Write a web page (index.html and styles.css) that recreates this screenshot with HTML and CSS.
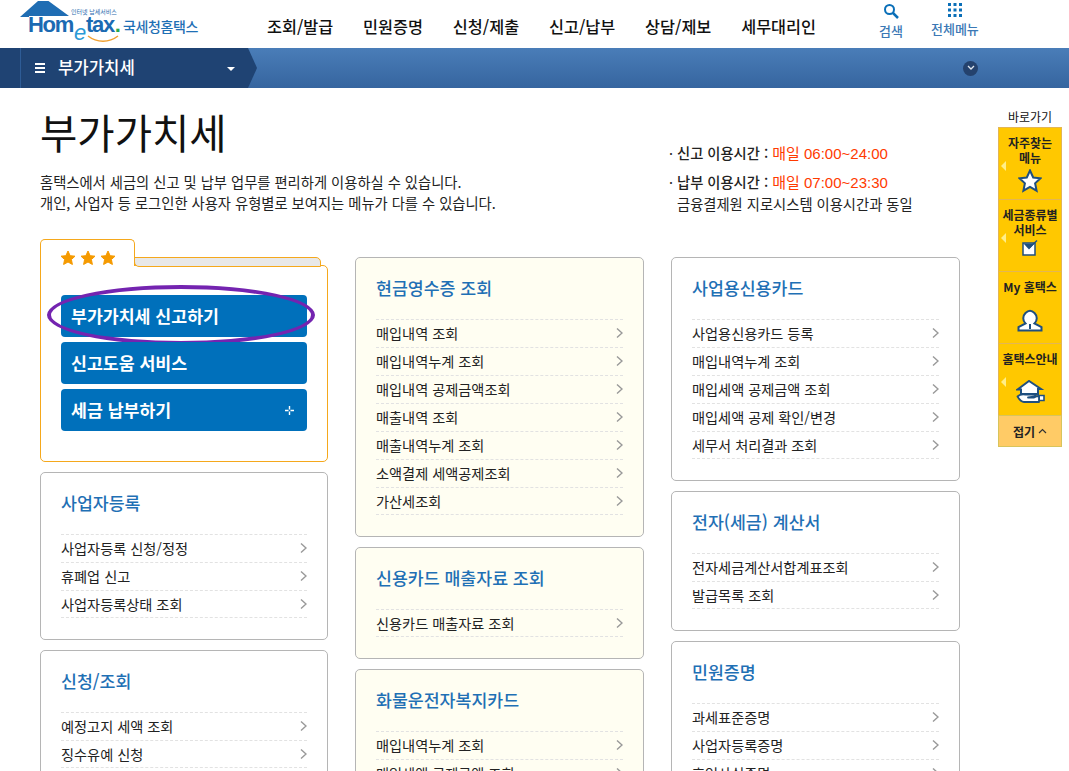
FILE: index.html
```html
<!DOCTYPE html>
<html lang="ko">
<head>
    <meta charset="UTF-8">
    <title>부가가치세 - 국세청홈택스</title>
    <link rel="stylesheet" href="styles.css">
</head>
<body>

<svg class="sprites" width="0" height="0">
    <symbol id="chev" viewBox="0 0 7 10"><path d="M1 .5l5 4.500-5 4.500" fill="none" stroke="#999" stroke-width="1.400"/></symbol>
    <symbol id="star" viewBox="0 0 24 24"><path d="M12 1.500l3.200 7 7.300.8-5.400 5 1.500 7.400L12 18l-6.600 3.700 1.500-7.400-5.400-5 7.300-.8z"/></symbol>
</svg>

<header class="top">
    <a class="logo">
        <svg class="logo-roof" width="50" height="18" viewBox="0 0 50 18"><path d="M0 17L18 1h10.500L49 16H9v1z" fill="#1f6db3"/></svg>
        <span class="logo-small">인터넷 납세서비스</span>
        <span class="logo-word">Hom<i>e</i>tax<b>.</b></span>
        <svg class="logo-smile" width="32" height="8" viewBox="0 0 32 8"><path d="M1 1c9 7 21 7 30 0" fill="none" stroke="#f0a030" stroke-width="1.500"/></svg>
        <span class="logo-name">국세청홈택스</span>
    </a>
    <nav class="gnb">
        <a>조회/발급</a>
        <a>민원증명</a>
        <a>신청/제출</a>
        <a>신고/납부</a>
        <a>상담/제보</a>
        <a>세무대리인</a>
    </nav>
    <div class="top-tools">
        <a class="tool">
            <svg width="16" height="16" viewBox="0 0 16 16"><circle cx="6.500" cy="6.500" r="4.500" fill="none" stroke="#0a6fb8" stroke-width="2"/><path d="M10 10l5 5" stroke="#0a6fb8" stroke-width="2.500"/></svg>
            검색
        </a>
        <a class="tool">
            <svg width="14" height="14" viewBox="0 0 14 14" fill="#0a6fb8"><rect width="3" height="3"/><rect x="5.500" width="3" height="3"/><rect x="11" width="3" height="3"/><rect y="5.500" width="3" height="3"/><rect x="5.500" y="5.500" width="3" height="3"/><rect x="11" y="5.500" width="3" height="3"/><rect y="11" width="3" height="3"/><rect x="5.500" y="11" width="3" height="3"/><rect x="11" y="11" width="3" height="3"/></svg>
            전체메뉴
        </a>
    </div>
</header>

<div class="subbar">
    <div class="crumb">
        <span class="burger"><i></i><i></i><i></i></span>
        <span class="crumb-text">부가가치세</span>
        <span class="caret"></span>
        <svg class="crumb-tip" width="10" height="40" viewBox="0 0 10 40"><path d="M0 0l9 20-9 20z" fill="#1f4373"/></svg>
    </div>
    <span class="more"><svg width="8" height="6" viewBox="0 0 8 6"><path d="M1 1l3 3 3-3" fill="none" stroke="#dfe6ee" stroke-width="1.300"/></svg></span>
</div>

<main class="content">
    <section class="intro">
        <div>
            <h1>부가가치세</h1>
            <p>홈택스에서 세금의 신고 및 납부 업무를 편리하게 이용하실 수 있습니다.<br>개인, 사업자 등 로그인한 사용자 유형별로 보여지는 메뉴가 다를 수 있습니다.</p>
        </div>
        <ul class="hours">
            <li>· <b>신고 이용시간 :</b> <em>매일 06:00~24:00</em></li>
            <li>· <b>납부 이용시간 :</b> <em>매일 07:00~23:30</em><br><span>금융결제원 지로시스템 이용시간과 동일</span></li>
        </ul>
    </section>

    <div class="cols">
        <div class="col">
            <div class="folder">
                <div class="folder-head">
                    <div class="folder-tab">
                        <svg width="16" height="16"><use href="#star" fill="#f59a00" stroke="#f59a00" stroke-width="1.500" stroke-linejoin="round"/></svg>
                        <svg width="16" height="16"><use href="#star" fill="#f59a00" stroke="#f59a00" stroke-width="1.500" stroke-linejoin="round"/></svg>
                        <svg width="16" height="16"><use href="#star" fill="#f59a00" stroke="#f59a00" stroke-width="1.500" stroke-linejoin="round"/></svg>
                    </div>
                    <div class="folder-back"></div>
                </div>
                <div class="folder-body">
                    <a class="blue-btn">부가가치세 신고하기<span class="mark"></span></a>
                    <a class="blue-btn">신고도움 서비스</a>
                    <a class="blue-btn">세금 납부하기<svg class="plus" width="9" height="9" viewBox="0 0 9 9"><path d="M4.500 0v3.500M4.500 5.500V9M0 4.500h3.500M5.500 4.500H9" stroke="#fff" stroke-width="1.400"/></svg></a>
                </div>
            </div>

            <div class="card">
                <h2>사업자등록</h2>
                <ul>
                    <li>사업자등록 신청/정정<svg width="7" height="10"><use href="#chev"/></svg></li>
                    <li>휴폐업 신고<svg width="7" height="10"><use href="#chev"/></svg></li>
                    <li>사업자등록상태 조회<svg width="7" height="10"><use href="#chev"/></svg></li>
                </ul>
            </div>
            <div class="card">
                <h2>신청/조회</h2>
                <ul>
                    <li>예정고지 세액 조회<svg width="7" height="10"><use href="#chev"/></svg></li>
                    <li>징수유예 신청<svg width="7" height="10"><use href="#chev"/></svg></li>
                </ul>
            </div>
        </div>

        <div class="col col-mid">
            <div class="card card-cream">
                <h2>현금영수증 조회</h2>
                <ul>
                    <li>매입내역 조회<svg width="7" height="10"><use href="#chev"/></svg></li>
                    <li>매입내역누계 조회<svg width="7" height="10"><use href="#chev"/></svg></li>
                    <li>매입내역 공제금액조회<svg width="7" height="10"><use href="#chev"/></svg></li>
                    <li>매출내역 조회<svg width="7" height="10"><use href="#chev"/></svg></li>
                    <li>매출내역누계 조회<svg width="7" height="10"><use href="#chev"/></svg></li>
                    <li>소액결제 세액공제조회<svg width="7" height="10"><use href="#chev"/></svg></li>
                    <li>가산세조회<svg width="7" height="10"><use href="#chev"/></svg></li>
                </ul>
            </div>
            <div class="card card-cream">
                <h2>신용카드 매출자료 조회</h2>
                <ul>
                    <li>신용카드 매출자료 조회<svg width="7" height="10"><use href="#chev"/></svg></li>
                </ul>
            </div>
            <div class="card card-cream">
                <h2>화물운전자복지카드</h2>
                <ul>
                    <li>매입내역누계 조회<svg width="7" height="10"><use href="#chev"/></svg></li>
                    <li>매입세액 공제금액 조회<svg width="7" height="10"><use href="#chev"/></svg></li>
                </ul>
            </div>
        </div>

        <div class="col col-mid">
            <div class="card">
                <h2>사업용신용카드</h2>
                <ul>
                    <li>사업용신용카드 등록<svg width="7" height="10"><use href="#chev"/></svg></li>
                    <li>매입내역누계 조회<svg width="7" height="10"><use href="#chev"/></svg></li>
                    <li>매입세액 공제금액 조회<svg width="7" height="10"><use href="#chev"/></svg></li>
                    <li>매입세액 공제 확인/변경<svg width="7" height="10"><use href="#chev"/></svg></li>
                    <li>세무서 처리결과 조회<svg width="7" height="10"><use href="#chev"/></svg></li>
                </ul>
            </div>
            <div class="card">
                <h2>전자(세금) 계산서</h2>
                <ul>
                    <li>전자세금계산서합계표조회<svg width="7" height="10"><use href="#chev"/></svg></li>
                    <li>발급목록 조회<svg width="7" height="10"><use href="#chev"/></svg></li>
                </ul>
            </div>
            <div class="card">
                <h2>민원증명</h2>
                <ul>
                    <li>과세표준증명<svg width="7" height="10"><use href="#chev"/></svg></li>
                    <li>사업자등록증명<svg width="7" height="10"><use href="#chev"/></svg></li>
                    <li>휴업사실증명<svg width="7" height="10"><use href="#chev"/></svg></li>
                </ul>
            </div>
        </div>
    </div>
</main>

<aside class="quick">
    <div class="quick-title">바로가기</div>
    <a class="quick-item has-arrow">
        <span>자주찾는<br>메뉴</span>
        <svg width="24" height="24"><use href="#star" fill="#fff" stroke="#1f4f7f" stroke-width="2"/></svg>
    </a>
    <a class="quick-item has-arrow">
        <span>세금종류별<br>서비스</span>
        <svg class="icon-check" width="18" height="18" viewBox="0 0 18 18"><path d="M2 4h12v12H2z" fill="#fff" stroke="#1f4f7f" stroke-width="1.500"/><path d="M2.500 4.500l5.500 6 5.500-6z" fill="#1f4f7f"/><path d="M8 9l8-7.500" fill="none" stroke="#1f4f7f" stroke-width="1.500"/></svg>
    </a>
    <a class="quick-item">
        <span>My 홈택스</span>
        <svg class="icon-low" width="26" height="24" viewBox="0 0 26 24"><path d="M1.500 22.500v-3.500l7-3.500c-3-3-3-7.500 0-10.500 3-3 6-3 9 0 3 3 3 7.500 0 10.500l7 3.500v3.500z" fill="#fff" stroke="#1f4f7f" stroke-width="2"/><path d="M13 16v5" stroke="#1f4f7f" stroke-width="2"/></svg>
    </a>
    <a class="quick-item has-arrow">
        <span>홈택스안내</span>
        <svg class="icon-low" width="29" height="24" viewBox="0 0 29 24"><path d="M1.500 9.500L13 1l12 8h-3v5H5V9.500z" fill="#fff" stroke="#1f4f7f" stroke-width="2"/><path d="M23 15.500h5v5h-5z" fill="#fff" stroke="#1f4f7f" stroke-width="1.600"/><path d="M1.500 16.500C4 14 7 14 9.500 14.500H18c2 0 2 3 0 3h-6l11-1.500v6H8c-3 0-5-3-6.500-5.500z" fill="#fff" stroke="#1f4f7f" stroke-width="1.800" stroke-linejoin="round"/></svg>
    </a>
    <a class="quick-fold">접기<svg width="9" height="6" viewBox="0 0 9 6"><path d="M1 5l3.500-3.500L8 5" fill="none" stroke="#333" stroke-width="1.200"/></svg></a>
</aside>

</body>
</html>
```

FILE: styles.css
```css
html, body {
    margin: 0;
    padding: 0;
    height: 771px;
    overflow: hidden;
}
body {
    position: relative;
    background-color: white;
    color: #222;
    font-family: "Noto Sans CJK KR", "Noto Sans", sans-serif;
    font-size: 14px;
}
a {
    color: inherit;
    text-decoration: none;
}
ul {
    list-style: none;
    margin: 0;
    padding: 0;
}
.sprites {
    position: absolute;
}

/* header */
.top {
    display: flex;
    height: 48px;
    padding-left: 20px;
}
.logo {
    position: relative;
    display: block;
    width: 247px;
    height: 48px;
}
.logo-roof {
    position: absolute;
    left: 0;
    top: 0;
}
.logo-small {
    position: absolute;
    left: 51px;
    top: 8px;
    font-size: 6px;
    line-height: 8px;
    color: #2a6cae;
}
.logo-word {
    position: absolute;
    left: 8px;
    top: 16px;
    font-family: "Liberation Sans", sans-serif;
    font-size: 22px;
    font-weight: bold;
    line-height: 18px;
    letter-spacing: -1.300px;
    color: #1b6ab2;
    white-space: nowrap;
}
.logo-word i {
    position: relative;
    top: 8px;
    padding: 0 1px;
    font-size: 22px;
    font-weight: normal;
    color: #2b9ad6;
}
.logo-word b {
    margin-left: 1px;
    color: #2aa84a;
}
.logo-smile {
    position: absolute;
    left: 67px;
    top: 35px;
}
.logo-name {
    position: absolute;
    left: 103px;
    top: 16px;
    font-size: 14px;
    font-weight: 500;
    line-height: 20px;
    letter-spacing: -.4px;
    color: #1f70b5;
}
.gnb {
    display: flex;
    gap: 29.800px;
    padding-top: 14px;
    font-size: 16.300px;
    font-weight: 500;
    line-height: 24px;
    color: #111;
}
.top-tools {
    display: flex;
    margin-left: 63px;
    gap: 28px;
}
.tool {
    display: flex;
    flex-direction: column;
    align-items: center;
    padding-top: 3px;
    gap: 3px;
    font-size: 13px;
    font-weight: 500;
    line-height: 18px;
    color: #3b78b5;
}

.subbar {
    display: flex;
    align-items: center;
    justify-content: flex-end;
    height: 40px;
    padding-right: 91px;
    background: linear-gradient(90deg, #1f4373 20px, transparent 20px), linear-gradient(#4a7db8, #36659f);
}
.crumb {
    position: relative;
    display: flex;
    align-items: center;
    box-sizing: border-box;
    width: 228px;
    height: 40px;
    margin-right: auto;
    margin-left: 20px;
    padding-left: 35px;
    border-left: 1px solid #2e5c96;
    background-color: #1f4373;
    color: white;
}
.burger {
    display: flex;
    flex-direction: column;
    gap: 2px;
    width: 10px;
    margin-left: -21px;
    margin-right: 13px;
}
.burger i {
    height: 2px;
    background-color: white;
}
.crumb-text {
    padding-bottom: 3px;
    font-size: 16.700px;
    font-weight: 500;
}
.caret {
    position: absolute;
    left: 206px;
    top: 19px;
    border: 4px solid transparent;
    border-top-color: white;
    border-bottom: 0;
}
.crumb-tip {
    position: absolute;
    left: 227px;
    top: 0;
}
.more {
    display: flex;
    align-items: center;
    justify-content: center;
    width: 15px;
    height: 15px;
    border-radius: 50%;
    background-color: #24426d;
}

/* page */
.content {
    width: 920px;
    margin-left: 40px;
}
.intro {
    display: flex;
    justify-content: space-between;
    height: 151px;
}
h1 {
    margin: 15px 0 0;
    font-size: 40.600px;
    font-weight: 400;
    line-height: 58px;
    color: #111;
}
.intro p {
    margin: 10px 0 0;
    font-size: 14.300px;
    line-height: 21px;
    color: #222;
}
.hours {
    width: 291px;
    padding-top: 54px;
    font-size: 14.300px;
    line-height: 21px;
}
.hours li {
    margin-bottom: 7px;
}
.hours b {
    font-weight: 500;
}
.hours em {
    font-family: "Liberation Sans", "Noto Sans CJK KR", sans-serif;
    font-size: 15px;
    font-style: normal;
    color: #ff3a00;
}
.hours span {
    padding-left: 8px;
}
.cols {
    display: grid;
    grid-template-columns: 288px 289px 289px;
    gap: 27px;
}
.col {
    display: flex;
    flex-direction: column;
    gap: 10px;
}
.col-mid {
    padding-top: 18px;
}

/* favourite box */
.folder-head {
    display: flex;
    height: 26px;
}
.folder-tab {
    position: relative;
    z-index: 1;
    display: flex;
    gap: 4px;
    box-sizing: border-box;
    width: 95px;
    height: 27px;
    padding: 10px 0 0 19px;
    border: 1px solid #f5a81c;
    border-bottom: 0;
    border-radius: 5px 5px 0 0;
    background-color: white;
}
.folder-back {
    flex: 1;
    height: 8px;
    margin: 18px 7px 0 -1px;
    border: 1px solid #f5a81c;
    border-radius: 0 5px 0 5px;
    background-color: #e8e8e8;
}
.folder-body {
    display: flex;
    flex-direction: column;
    gap: 5px;
    box-sizing: border-box;
    height: 197px;
    padding: 29px 20px 0;
    border: 1px solid #f5a81c;
    border-radius: 0 5px 5px 5px;
}
.blue-btn {
    position: relative;
    display: block;
    height: 42px;
    padding-left: 10px;
    border-radius: 4px;
    background-color: #0070bb;
    color: white;
    font-size: 17.300px;
    font-weight: 700;
    line-height: 41px;
}
.mark {
    position: absolute;
    left: -14px;
    top: -10px;
    width: 268px;
    height: 60px;
    box-sizing: border-box;
    border: 4px solid #7424b0;
    border-radius: 50%;
}
.plus {
    position: absolute;
    right: 13px;
    top: 17px;
}

/* menu cards */
.card {
    box-sizing: border-box;
    padding: 0 20px 21px;
    border: 1px solid #b5b5b5;
    border-radius: 5px;
    background-color: white;
}
.card-cream {
    background-color: #fffef2;
}
.card h2 {
    margin: 0;
    height: 61px;
    font-size: 17.300px;
    font-weight: 500;
    line-height: 60px;
    color: #1f70b5;
}
.card li {
    display: flex;
    align-items: center;
    justify-content: space-between;
    height: 26px;
    padding-bottom: 1px;
    border-top: 1px dashed #e2e2e2;
    font-size: 14.200px;
    color: #222;
}
.card li:last-child {
    height: 25px;
    border-bottom: 1px dashed #e2e2e2;
}

/* quick menu */
.quick {
    position: absolute;
    left: 998px;
    top: 108px;
    width: 64px;
}
.quick-title {
    height: 19px;
    text-align: center;
    font-size: 12px;
    line-height: 18px;
    color: #111;
}
.quick-item {
    position: relative;
    display: flex;
    flex-direction: column;
    align-items: center;
    justify-content: space-between;
    box-sizing: border-box;
    height: 72px;
    padding: 7px 0 6px;
    border: 1px solid #e3b654;
    border-bottom: 0;
    background-color: #ffc800;
    text-align: center;
    font-size: 12px;
    font-weight: 700;
    line-height: 15px;
    color: #222;
}
.quick-item.has-arrow::before {
    content: "";
    position: absolute;
    left: 2px;
    top: 33px;
    border: 5px solid transparent;
    border-right-color: #ffee88;
    border-left: 0;
}
.icon-check {
    margin-bottom: 8px;
}
.icon-low {
    margin-bottom: 5px;
}
.quick-fold {
    display: flex;
    align-items: center;
    justify-content: center;
    gap: 3px;
    box-sizing: border-box;
    height: 32px;
    border: 1px solid #d8c45c;
    background-color: #ffcb66;
    font-size: 12px;
    font-weight: 700;
}
```
